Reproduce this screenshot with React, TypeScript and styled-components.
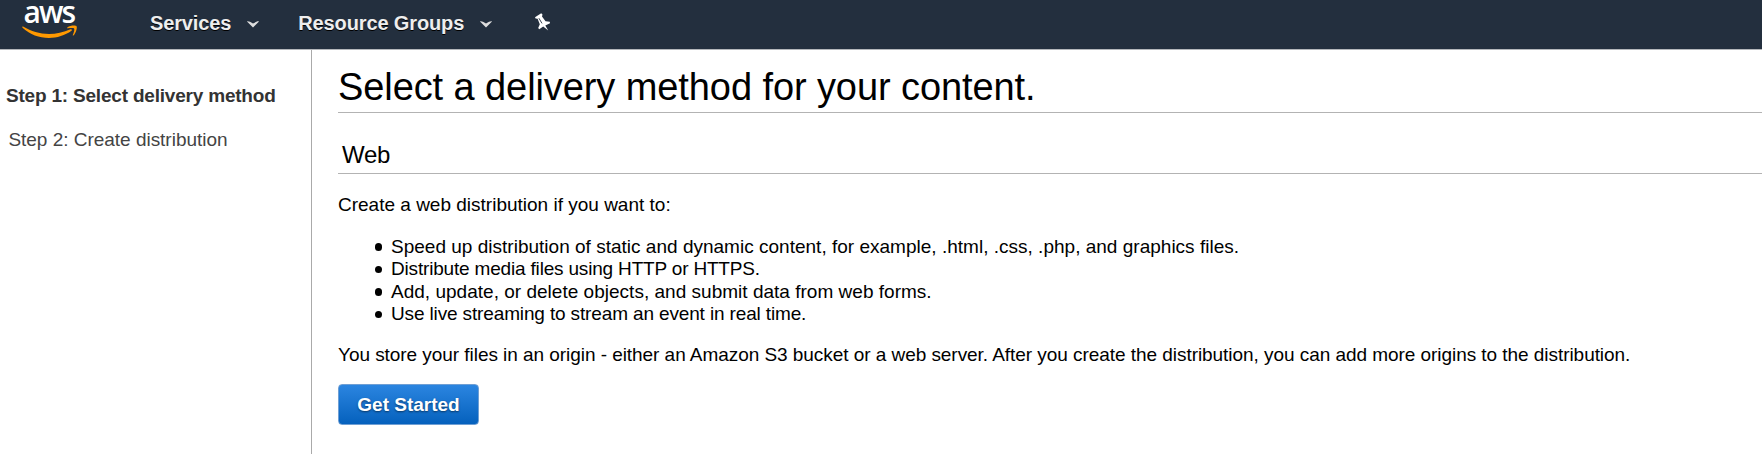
import React from "react";
import styled, { createGlobalStyle } from "styled-components";

const GlobalStyle = createGlobalStyle`
  * { box-sizing: border-box; }
  body {
    margin: 0;
    background: #fff;
    color: #000;
    font-family: "Liberation Sans", Arial, sans-serif;
    font-size: 19px;
  }
  h1, h2, p, ul { margin: 0; padding: 0; font-weight: normal; }
`;

const Page = styled.div`
  height: 454px;
  display: flex;
  flex-direction: column;
  overflow: hidden;
`;

const TopBar = styled.header`
  flex: none;
  height: 50px;
  display: flex;
  align-items: flex-start;
  background: #232f3e;
  border-bottom: 1px solid #b4b7bb;
`;

const Logo = styled.a`
  width: 56px;
  height: 40px;
  margin-left: 22px;
  display: flex;
  flex-direction: column;
  color: #fff;
`;

const LogoWord = styled.span`
  height: 25px;
  padding-left: 1.5px;
  font: 600 30px/23px "Open Sans", sans-serif;
  letter-spacing: -1.9px;
`;

const Smile = styled.svg`
  display: block;
  flex: none;
`;

const NavItem = styled.a<{ $left: number }>`
  display: flex;
  align-items: center;
  height: 46px;
  margin-left: ${(p) => p.$left}px;
  color: #eee;
  font-size: 20px;
  font-weight: bold;
  letter-spacing: -0.13px;
  text-shadow: 0 1px 0 #000;
  white-space: nowrap;
`;

const Caret = styled.svg`
  margin-left: 16px;
  margin-top: 3px;
`;

const Pin = styled.svg`
  margin: 13px 0 0 43px;
`;

const Body = styled.div`
  flex: 1;
  display: flex;
`;

const Steps = styled.nav`
  flex: none;
  width: 312px;
  padding: 34px 0 0 6px;
  display: flex;
  flex-direction: column;
  gap: 20px;
  border-right: 1px solid #aaa;
`;

const Step = styled.span<{ $active?: boolean }>`
  padding-left: ${(p) => (p.$active ? 0 : 2.4)}px;
  line-height: 24px;
  color: ${(p) => (p.$active ? "#333" : "#444")};
  font-weight: ${(p) => (p.$active ? "bold" : "normal")};
  letter-spacing: ${(p) => (p.$active ? -0.2 : -0.02)}px;
  white-space: nowrap;
`;

const Content = styled.main`
  flex: 1;
  padding-left: 26px;
  white-space: nowrap;
`;

const Title = styled.h1`
  height: 63px;
  padding-top: 14px;
  border-bottom: 1px solid #b3b3b3;
  font-size: 38px;
  line-height: 46px;
  letter-spacing: -0.09px;
`;

const SectionTitle = styled.h2`
  height: 61px;
  padding: 27px 0 0 4px;
  border-bottom: 1px solid #b3b3b3;
  font-size: 24px;
  line-height: 30px;
  letter-spacing: -0.3px;
`;

const Text = styled.p<{ $top: number; $spacing?: number }>`
  margin-top: ${(p) => p.$top}px;
  line-height: 22px;
  letter-spacing: ${(p) => p.$spacing ?? 0}px;
`;

const Reasons = styled.ul`
  margin-top: 19.5px;
  padding-left: 53px;
  list-style: none;
`;

const Reason = styled.li<{ $spacing: number }>`
  position: relative;
  line-height: 22.5px;
  letter-spacing: ${(p) => p.$spacing}px;
  &::before {
    content: "";
    position: absolute;
    left: -16.5px;
    top: 7.5px;
    width: 7.5px;
    height: 7.5px;
    border-radius: 50%;
    background: #000;
  }
`;

const StartButton = styled.button`
  display: block;
  width: 141px;
  height: 41px;
  margin-top: 18px;
  padding: 1px 0 0;
  border: 1px solid #6f9fd4;
  border-radius: 4px;
  background: linear-gradient(#2b85e0, #0561bd);
  color: #fff;
  font: bold 19px/38px "Liberation Sans", Arial, sans-serif;
  text-shadow: 0 1px 2px rgba(0, 0, 0, 0.5);
`;

const MenuCaret = () => (
  <Caret width="12" height="7" viewBox="0 0 12 7">
    <path d="M0 .4C2 .2 3 .8 6 2.6 9 .8 10 .2 12 .4L6 6.6Z" fill="#ddd" />
  </Caret>
);

const reasons = [
  {
    text: "Speed up distribution of static and dynamic content, for example, .html, .css, .php, and graphics files.",
    spacing: 0.01,
  },
  { text: "Distribute media files using HTTP or HTTPS.", spacing: -0.18 },
  { text: "Add, update, or delete objects, and submit data from web forms.", spacing: 0.015 },
  { text: "Use live streaming to stream an event in real time.", spacing: -0.14 },
];

export default function App() {
  return (
    <Page>
      <GlobalStyle />
      <TopBar>
        <Logo>
          <LogoWord>aws</LogoWord>
          <Smile width="56" height="13" viewBox="0 0 56 13">
            <path d="M.4 1.6C.1 2 .2 2.5.8 3 8 9.500 17 13 27 13c8 0 16-2.600 22.500-7.200 1-.8.2-2-1-1.500C41.500 7.300 34 9 27 9 17.500 9 9 6.300 1.500 1.800 1 1.500.7 1.300.4 1.600Z" fill="#f90" />
            <path d="M45.300 2.500C48 .4 53.500.2 54.500 1.200c1 1.100-.4 6.700-3 9.200-.5.4-.9.2-.7-.4.9-2 2-5.500 1.300-6.500-.7-.9-4.100-.5-6.400-.3-.7.100-.9-.3-.4-.7Z" fill="#f90" />
          </Smile>
        </Logo>
        <NavItem $left={72}>
          Services
          <MenuCaret />
        </NavItem>
        <NavItem $left={39}>
          Resource Groups
          <MenuCaret />
        </NavItem>
        <Pin width="16" height="18" viewBox="0 0 16 18">
          <path d="M0 4.200 6.200.2 7.500 1.500 7 3.500 10.500 8.200 14.800 8.700 15 10.300 10.300 12.600 13.200 17.500 8.200 13.600 4.200 16.300 3.200 15 4.800 11.300 2.600 5.800.6 5.500Z" fill="#fff" />
          <path d="M3.900 5.200 7 10.400" stroke="#232f3e" strokeWidth=".9" />
        </Pin>
      </TopBar>
      <Body>
        <Steps>
          <Step $active>Step 1: Select delivery method</Step>
          <Step>Step 2: Create distribution</Step>
        </Steps>
        <Content>
          <Title>Select a delivery method for your content.</Title>
          <SectionTitle>Web</SectionTitle>
          <Text $top={20}>Create a web distribution if you want to:</Text>
          <Reasons>
            {reasons.map((reason) => (
              <Reason key={reason.text} $spacing={reason.spacing}>
                {reason.text}
              </Reason>
            ))}
          </Reasons>
          <Text $top={18.5} $spacing={-0.051}>
            You store your files in an origin - either an Amazon S3 bucket or a web server. After you create the
            distribution, you can add more origins to the distribution.
          </Text>
          <StartButton>Get Started</StartButton>
        </Content>
      </Body>
    </Page>
  );
}
